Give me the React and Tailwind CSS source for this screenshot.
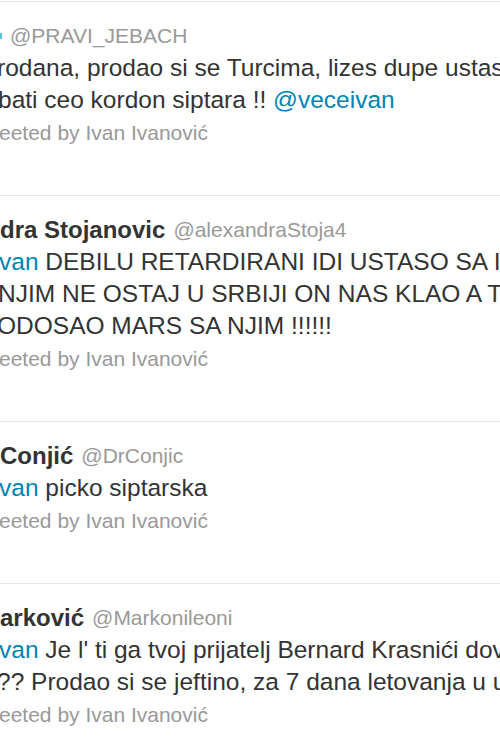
const LINK = 'text-[#0084b4]';

const tweets = [
  {
    name: null,
    handle: '@PRAVI_JEBACH',
    lines: [
      { ml: '-ml-[3px]', parts: ['rodana, prodao si se Turcima, lizes dupe ustasa'] },
      { ml: '-ml-[2px]', parts: ['bati ceo kordon siptara !! ', { link: '@veceivan' }] },
    ],
  },
  {
    name: 'dra Stojanovic',
    handle: '@alexandraStoja4',
    lines: [
      { ml: '-ml-[1px]', parts: [{ link: 'van' }, ' DEBILU RETARDIRANI IDI USTASO SA I'] },
      { ml: '-ml-[2px]', parts: ['NJIM NE OSTAJ U SRBIJI ON NAS KLAO A TI'] },
      { ml: '-ml-[3px]', parts: ['ODOSAO MARS SA NJIM !!!!!!'] },
    ],
  },
  {
    name: 'Conjić',
    handle: '@DrConjic',
    lines: [{ ml: '-ml-[1px]', parts: [{ link: 'van' }, ' picko siptarska'] }],
  },
  {
    name: 'arković',
    handle: '@Markonileoni',
    lines: [
      { ml: '-ml-[1px]', parts: [{ link: 'van' }, " Je l' ti ga tvoj prijatelj Bernard Krasnići doveo"] },
      { ml: '-ml-[3px]', parts: ['?? Prodao si se jeftino, za 7 dana letovanja u u'] },
    ],
  },
];

function Tweet({ tweet }) {
  return (
    <div className="border-t border-[#e6e6e6] pt-[18px] pb-[46px]">
      {/* name + handle */}
      <div className="flex h-[32px] items-center whitespace-nowrap">
        {tweet.name ? (
          <span className="text-[24px] font-bold text-[#333333]">{tweet.name}</span>
        ) : (
          <span className="inline-block h-[6px] w-[2px] bg-[#5bc0de]" />
        )}
        <span className="ml-[8px] text-[21px] text-[#999999]">{tweet.handle}</span>
      </div>

      {/* tweet text, cropped left and right */}
      {tweet.lines.map((line, i) => (
        <div key={i} className={`h-[32px] whitespace-nowrap text-[24.5px] leading-[32px] text-[#333333] ${line.ml}`}>
          {line.parts.map((p, j) =>
            typeof p === 'string' ? (
              <span key={j}>{p}</span>
            ) : (
              <span key={j} className={LINK}>
                {p.link}
              </span>
            )
          )}
        </div>
      ))}

      <div className="mt-[1px] h-[32px] whitespace-nowrap text-[21px] leading-[32px] text-[#999999] -ml-[1px]">
        eeted by Ivan Ivanović
      </div>
    </div>
  );
}

export default function App() {
  return (
    <div className="h-[750px] w-[500px] overflow-hidden bg-white pt-[1px] font-['Liberation_Sans',Arial,sans-serif]">
      {tweets.map((t, i) => (
        <Tweet key={i} tweet={t} />
      ))}
    </div>
  );
}
